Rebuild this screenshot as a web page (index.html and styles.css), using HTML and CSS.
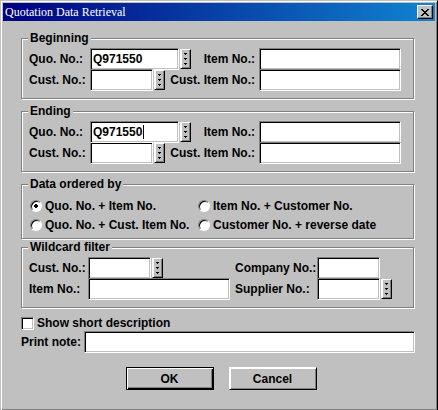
FILE: index.html
```html
<!DOCTYPE html>
<html lang="en">
<head>
    <meta charset="utf-8">
    <title>Quotation Data Retrieval</title>
    <link rel="stylesheet" href="styles.css">
</head>
<body>
    <div class="window">
        <div class="title-bar">
            <span class="title">Quotation Data Retrieval</span>
            <button type="button" class="close" aria-label="Close">
                <svg width="8" height="7" viewBox="0 0 8 7" shape-rendering="crispEdges">
                    <path d="M0 0h2v1h1v1h2v-1h1v-1h2v1h-1v1h-1v1h-1v1h1v1h1v1h1v1h-2v-1h-1v-1h-2v1h-1v1h-2v-1h1v-1h1v-1h1v-1h-1v-1h-1v-1h-1z"/>
                </svg>
            </button>
        </div>

        <form class="content">
            <fieldset class="group">
                <legend>Beginning</legend>
                <div class="row">
                    <div class="row-left">
                        <label class="label" for="begin-quo">Quo. No.:</label>
                        <input type="text" class="field medium" id="begin-quo" value="Q971550">
                        <button type="button" class="lookup" aria-label="Look up"></button>
                        <label class="label-right" for="begin-item">Item No.:</label>
                    </div>
                    <input type="text" class="field" id="begin-item">
                </div>
                <div class="row">
                    <div class="row-left">
                        <label class="label" for="begin-cust">Cust. No.:</label>
                        <input type="text" class="field short" id="begin-cust">
                        <button type="button" class="lookup" aria-label="Look up"></button>
                        <label class="label-right" for="begin-cust-item">Cust. Item No.:</label>
                    </div>
                    <input type="text" class="field" id="begin-cust-item">
                </div>
            </fieldset>

            <fieldset class="group">
                <legend>Ending</legend>
                <div class="row">
                    <div class="row-left">
                        <label class="label" for="end-quo">Quo. No.:</label>
                        <div class="editing">
                            <input type="text" class="field medium" id="end-quo" value="Q971550">
                            <span class="caret"></span>
                        </div>
                        <button type="button" class="lookup" aria-label="Look up"></button>
                        <label class="label-right" for="end-item">Item No.:</label>
                    </div>
                    <input type="text" class="field" id="end-item">
                </div>
                <div class="row">
                    <div class="row-left">
                        <label class="label" for="end-cust">Cust. No.:</label>
                        <input type="text" class="field short" id="end-cust">
                        <button type="button" class="lookup" aria-label="Look up"></button>
                        <label class="label-right" for="end-cust-item">Cust. Item No.:</label>
                    </div>
                    <input type="text" class="field" id="end-cust-item">
                </div>
            </fieldset>

            <fieldset class="group order">
                <legend>Data ordered by</legend>
                <div class="options">
                    <label class="option"><input type="radio" name="order" checked>Quo. No. + Item No.</label>
                    <label class="option"><input type="radio" name="order">Item No. + Customer No.</label>
                    <label class="option"><input type="radio" name="order">Quo. No. + Cust. Item No.</label>
                    <label class="option"><input type="radio" name="order">Customer No. + reverse date</label>
                </div>
            </fieldset>

            <fieldset class="group wildcard">
                <legend>Wildcard filter</legend>
                <div class="row">
                    <label for="wild-cust">Cust. No.:</label>
                    <div class="cell">
                        <input type="text" class="field short" id="wild-cust">
                        <button type="button" class="lookup" aria-label="Look up"></button>
                    </div>
                    <label class="label-second" for="wild-company">Company No.:</label>
                    <div class="cell">
                        <input type="text" class="field short" id="wild-company">
                    </div>
                </div>
                <div class="row">
                    <label for="wild-item">Item No.:</label>
                    <input type="text" class="field" id="wild-item">
                    <label class="label-second" for="wild-supplier">Supplier No.:</label>
                    <div class="cell">
                        <input type="text" class="field short" id="wild-supplier">
                        <button type="button" class="lookup" aria-label="Look up"></button>
                    </div>
                </div>
            </fieldset>

            <label class="check"><input type="checkbox">Show short description</label>
            <div class="note">
                <label for="note">Print note:</label>
                <input type="text" class="field" id="note">
            </div>

            <div class="buttons">
                <button type="button" class="button default">OK</button>
                <button type="button" class="button">Cancel</button>
            </div>
        </form>
    </div>
</body>
</html>
```

FILE: styles.css
```css
* {
    box-sizing: border-box;
}

body {
    margin: 0;
    background: #c0c0c0;
    color: #000;
    font: bold 12px/14px "Liberation Sans", Arial, sans-serif;
}

input,
button {
    margin: 0;
    padding: 0;
    font: inherit;
    color: inherit;
    border-radius: 0;
    outline: none;
}

label {
    white-space: nowrap;
}

.window {
    min-height: 100vh;
    padding: 2px;
    background: #c0c0c0;
    border: 1px solid;
    border-color: #c0c0c0 #000 #000 #c0c0c0;
    box-shadow: inset 1px 1px #fff, inset -1px -1px #808080;
}

.title-bar {
    display: flex;
    align-items: center;
    justify-content: space-between;
    height: 18px;
    padding: 0 2px;
    background: linear-gradient(to right, #000080, #1084d0);
}

.title {
    color: #fff;
    font: 12px/18px "Liberation Serif", "Times New Roman", serif;
}

.close {
    display: flex;
    align-items: center;
    justify-content: center;
    width: 16px;
    height: 14px;
    background: #c0c0c0;
    border: 1px solid;
    border-color: #fff #000 #000 #fff;
    box-shadow: inset -1px -1px #808080;
}

.content {
    padding: 11px 20px 0 18px;
}

/* Group boxes */
.group {
    min-width: 0;
    margin: 0 1px 6px 0;
    padding: 3px 12px 7px 7px;
    border: 1px solid #808080;
    box-shadow: 1px 1px #fff, inset 1px 1px #fff;
}

.group legend {
    margin-left: -1px;
    padding: 0 2px;
    background: #c0c0c0;
    line-height: 13px;
}

.row {
    display: grid;
    grid-template-columns: 230px 1fr;
    align-items: center;
}

.row + .row {
    margin-top: -1px;
}

.row-left,
.cell {
    display: flex;
    align-items: center;
    gap: 1px;
}

.label {
    width: 60px;
}

.label-right {
    margin-left: auto;
    padding-right: 4px;
}

.label-second {
    padding-left: 5px;
}

.field {
    width: 100%;
    min-width: 0;
    height: 22px;
    padding: 0 2px;
    background: #fff;
    border: 1px solid;
    border-color: #808080 #fff #fff #808080;
    box-shadow: inset 1px 1px #000, inset -1px -1px #c0c0c0;
}

.medium {
    width: 89px;
}

.short {
    width: 63px;
}

.editing {
    display: flex;
    position: relative;
}

.caret {
    position: absolute;
    top: 4px;
    left: 53px;
    width: 1px;
    height: 14px;
    background: #000;
}

.lookup {
    width: 11px;
    height: 20px;
    background:
        linear-gradient(#000, #000) 3px 3px / 3px 1px,
        linear-gradient(#000, #000) 4px 4px / 1px 1px,
        linear-gradient(#000, #000) 3px 8px / 3px 1px,
        linear-gradient(#000, #000) 4px 9px / 1px 1px,
        linear-gradient(#000, #000) 3px 13px / 3px 1px,
        linear-gradient(#000, #000) 4px 14px / 1px 1px,
        #c0c0c0;
    background-repeat: no-repeat;
    border: 1px solid;
    border-color: #fff #000 #000 #fff;
    box-shadow: inset 1px 0 #fff, inset -1px -1px #808080;
}

/* Sort order */
.order {
    margin-bottom: 2px;
    padding: 5px 7px 4px;
}

.options {
    display: grid;
    grid-template-columns: 168px 1fr;
    padding-left: 1px;
}

.option,
.check {
    display: flex;
    align-items: center;
    gap: 3px;
    height: 19px;
}

.option input {
    appearance: none;
    width: 12px;
    height: 12px;
    background: #fff;
    border: 1px solid;
    border-color: #808080 #fff #fff #808080;
    border-radius: 50%;
    box-shadow: inset 1px 1px #000;
}

.option input:checked {
    background: radial-gradient(circle, #000 2px, #fff 2px);
}

/* Wildcard filter */
.wildcard {
    margin-bottom: 7px;
}

.wildcard .row {
    grid-template-columns: 59px 142px 87px 1fr;
}

.check {
    height: 16px;
}

.check input {
    appearance: none;
    width: 13px;
    height: 13px;
    background: #fff;
    border: 1px solid;
    border-color: #808080 #fff #fff #808080;
    box-shadow: inset 1px 1px #000, inset -1px -1px #c0c0c0;
}

.note {
    display: grid;
    grid-template-columns: 63px 1fr;
    align-items: center;
}

.buttons {
    display: flex;
    justify-content: center;
    gap: 15px;
    padding: 14px 0 18px 6px;
}

.button {
    width: 88px;
    height: 23px;
    background: #c0c0c0;
    border: 1px solid;
    border-color: #fff #000 #000 #fff;
    box-shadow: inset 1px 1px #fff, inset -1px -1px #808080;
}

.button.default {
    border-color: #000;
    box-shadow: inset 1px 1px #fff, inset -1px -1px #000, inset -2px -2px #808080;
}
```
